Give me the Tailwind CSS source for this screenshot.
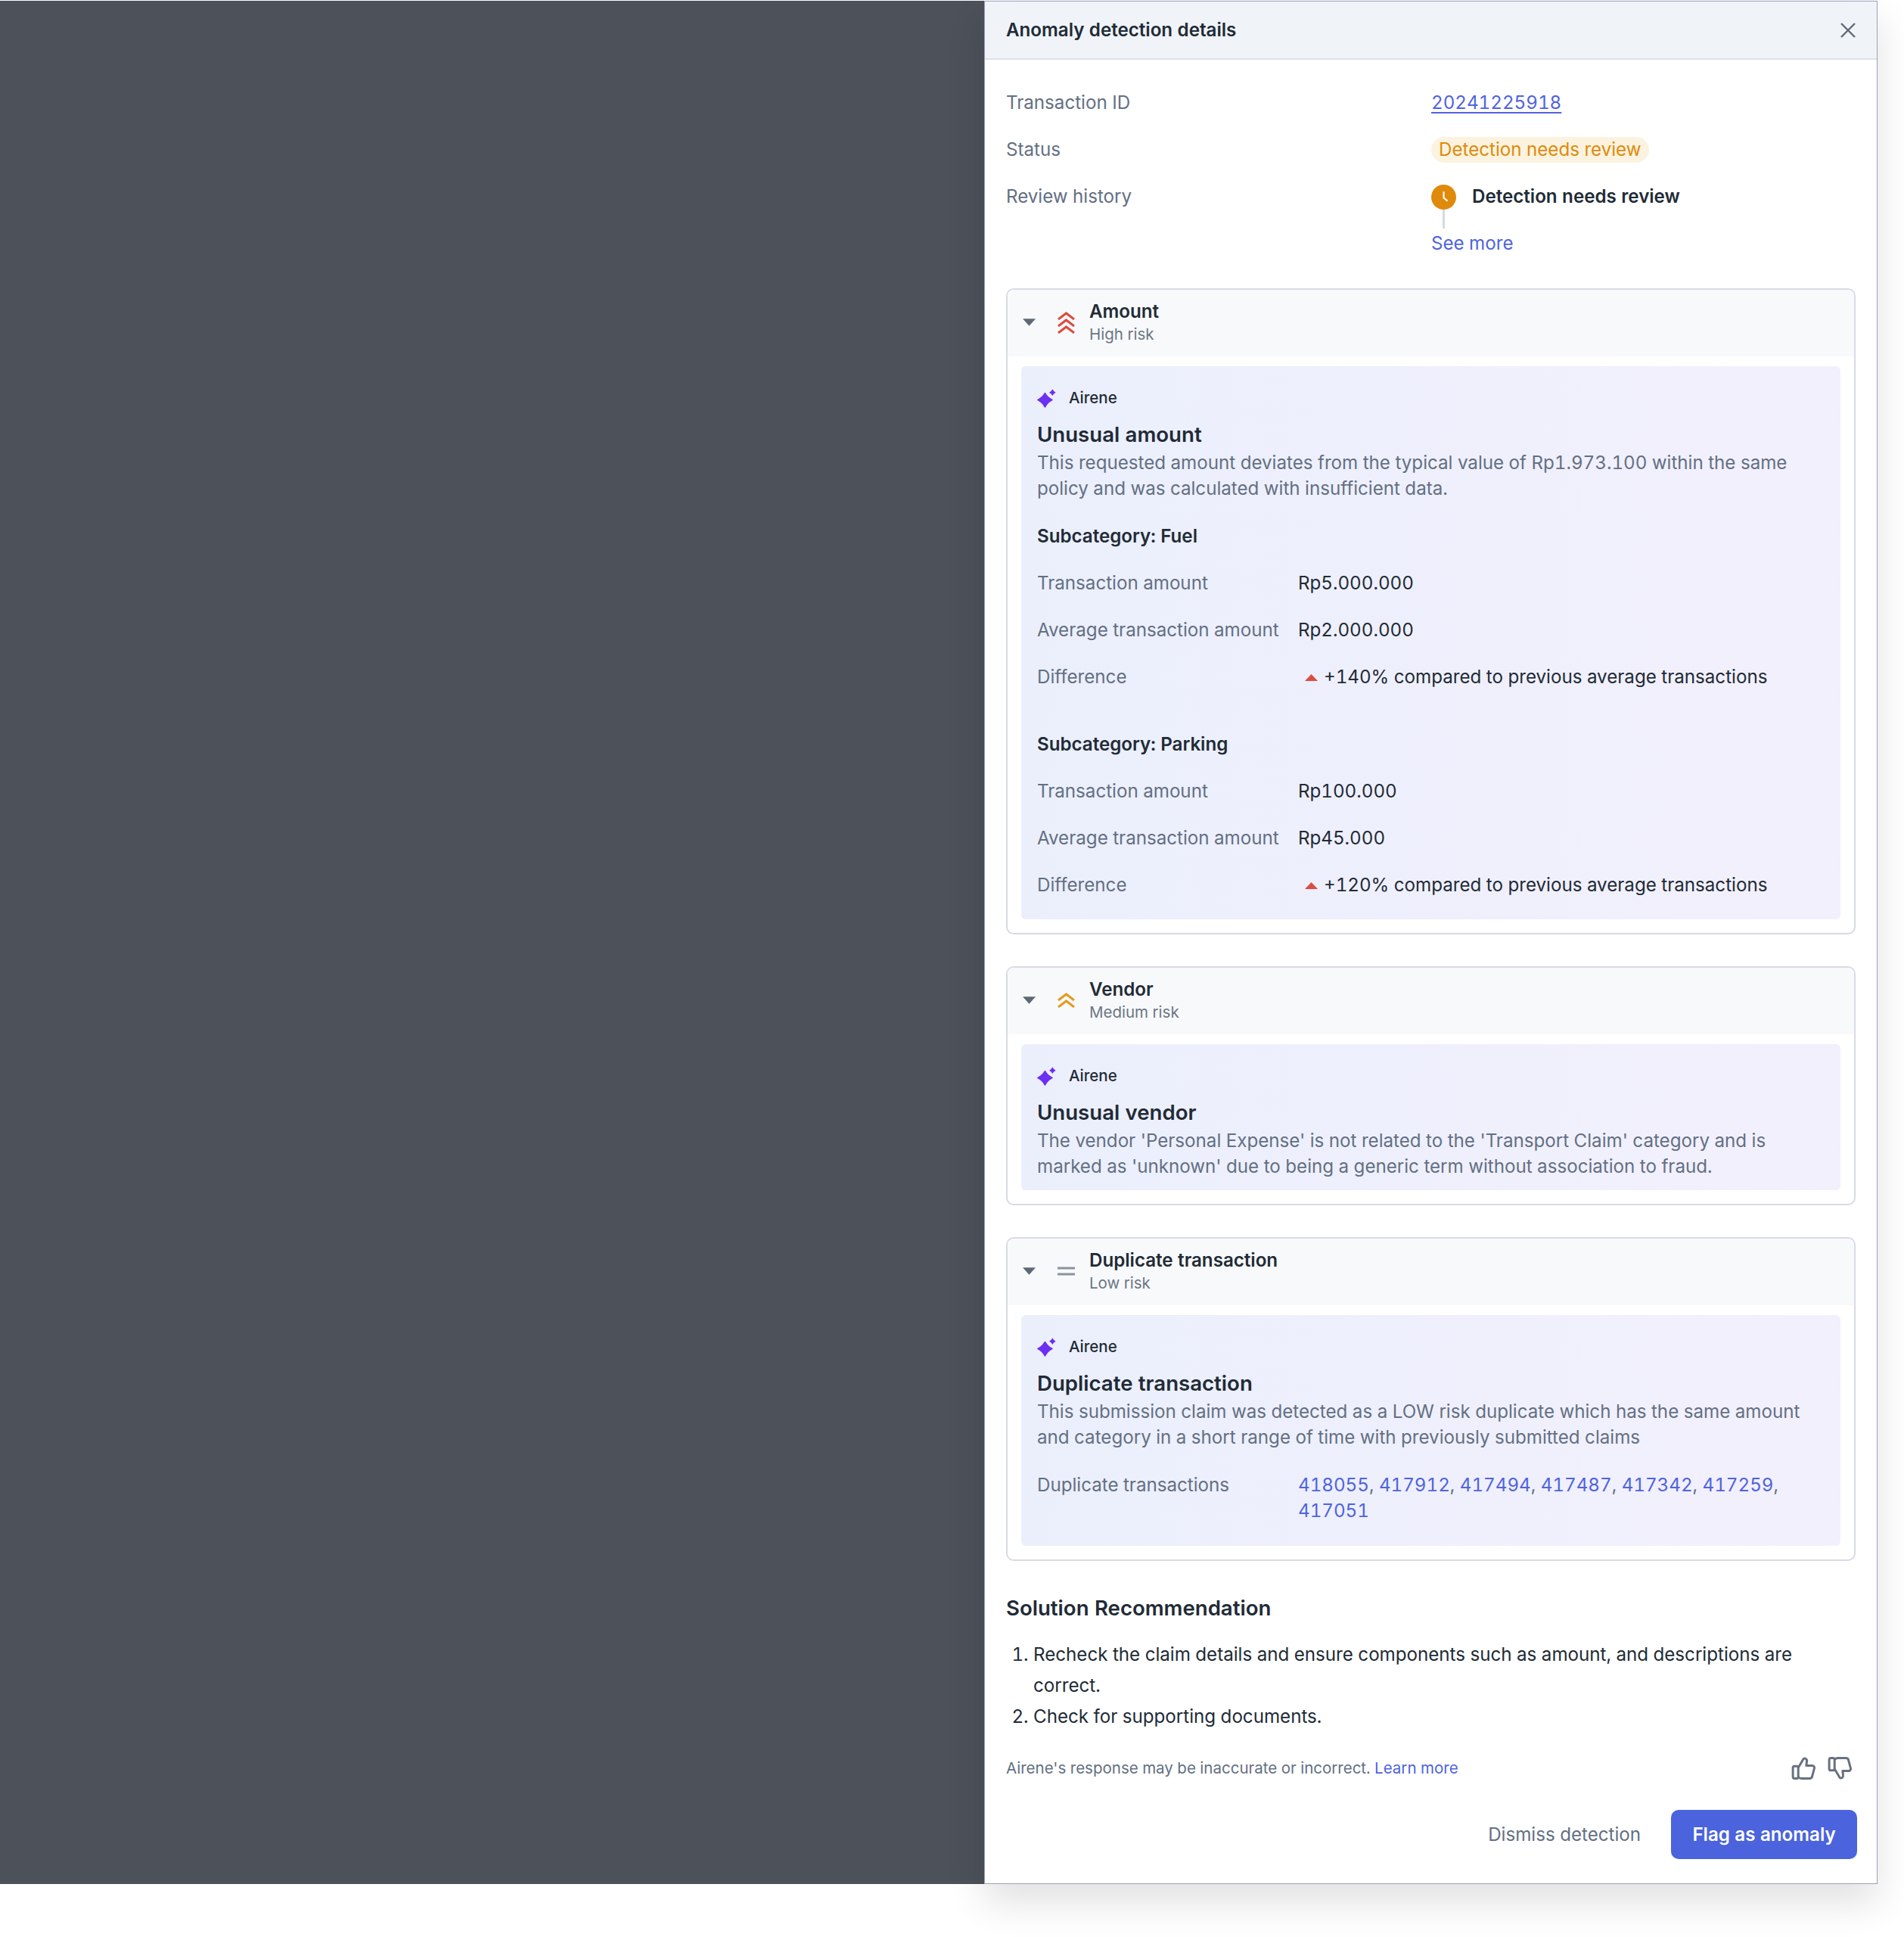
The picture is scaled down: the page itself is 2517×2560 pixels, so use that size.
<!DOCTYPE html>
<html lang="en">
  <head>
    <meta charset="UTF-8" />
    <title>Anomaly detection details</title>
    <script src="https://cdn.jsdelivr.net/npm/@tailwindcss/browser@4"></script>
  </head>
  <body class="bg-white text-[#212b36] font-['Inter',sans-serif] text-[24.15px] leading-[34px] tabular-nums">
    <div class="w-[2482px] h-[2560px] pt-px">
      <div class="flex h-[2489px]">
        <!-- Backdrop -->
        <div class="w-[1301px] bg-[#4c515a]"></div>

        <!-- Drawer -->
        <div class="w-[1181px] bg-white border border-[#9aa2b6] shadow-[0_24px_48px_rgba(0,0,0,0.12)] flex flex-col">
          <div class="h-[77px] shrink-0 bg-[#f0f3f8] border-b-2 border-[#dde1e8] flex items-center justify-between pl-[28px] pr-[26px]">
            <h1 class="font-semibold">Anomaly detection details</h1>
            <svg class="size-[24px] text-[#5f6875]" viewBox="0 0 24 24" fill="none" stroke="currentColor" stroke-width="2.4"><path d="M3 3l18 18M21 3L3 21" /></svg>
          </div>

          <div class="flex flex-col px-[28px] pt-[26px]">
            <!-- Summary -->
            <div class="grid grid-cols-[562px_1fr] text-[#637083]">
              <div class="h-[62px] flex items-center">Transaction ID</div>
              <div class="h-[62px] flex items-center"><a class="text-[#4f63e0] underline underline-offset-4">20241225918</a></div>
              <div class="h-[62px] flex items-center">Status</div>
              <div class="h-[62px] flex items-center"><span class="h-[34px] px-[10px] rounded-full bg-[#fbf3df] text-[#e08a0b] flex items-center">Detection needs review</span></div>
              <div class="h-[62px] flex items-center">Review history</div>
              <div class="h-[62px] flex items-center gap-[21px] relative">
                <svg class="size-[33px]" viewBox="0 0 32 32"><circle cx="16" cy="16" r="16" fill="#e08a0b" /><path d="M16 9v8l5 4" fill="none" stroke="#fff" stroke-width="2" /></svg>
                <span class="font-semibold text-[#212b36]">Detection needs review</span>
                <span class="absolute left-[15px] top-[48px] w-[3px] h-[25px] bg-[#d5d9e1]"></span>
              </div>
              <div class="h-[62px]"></div>
              <div class="h-[62px] flex items-center text-[#4f63e0]">See more</div>
            </div>

            <!-- Amount -->
            <section class="mt-[28px] border-2 border-[#d7dbe5] rounded-[10px] pb-[18px]">
              <div class="h-[88px] bg-[#f8f9fb] rounded-t-[8px] flex items-center pl-[20px]">
                <svg class="w-[17px] h-[10px] -mt-[2px] text-[#5f6875]" viewBox="0 0 16 9"><path d="M0 0h16L8 9z" fill="currentColor" /></svg>
                <svg class="ml-[29px] -mt-[2px] w-[23px] h-[29px] text-[#dc4c3f]" viewBox="0 0 23 29" fill="none" stroke="currentColor" stroke-width="3"><path d="M1 10L11.500 2 22 10M1 19L11.500 11 22 19M1 28L11.500 20 22 28" /></svg>
                <div class="ml-[19px]">
                  <div class="font-semibold leading-[30px]">Amount</div>
                  <div class="text-[20.5px] leading-[30px] text-[#6b7684]">High risk</div>
                </div>
              </div>
              <div class="mx-[18px] mt-[13px] rounded-[6px] bg-linear-to-r from-[#ebeffc] to-[#f3f0fd] pt-[25px] px-[21px] pb-[14px]">
                <div class="flex items-center gap-[17px] h-[34px] font-medium text-[20.5px]">
                  <svg class="size-[25px]" viewBox="0 0 24 24" fill="#6d2ff2" stroke="#6d2ff2" stroke-width="1.6" stroke-linejoin="round"><path d="M10 5.500Q13 11 19 14 13 17 10 23 7 17 1 14 7 11 10 5.500zM19.500 1.500Q20.200 3.800 22.500 4.500 20.200 5.200 19.500 7.500 18.800 5.200 16.500 4.500 18.800 3.800 19.500 1.500z" /></svg>
                  <span>Airene</span>
                </div>
                <h2 class="mt-[11px] text-[27.6px] leading-[41px] font-semibold">Unusual amount</h2>
                <p class="text-[#637083]">This requested amount deviates from the typical value of Rp1.973.100 within the same policy and was calculated with insufficient data.</p>

                <div class="mt-[15px] h-[62px] flex items-center font-semibold">Subcategory: Fuel</div>
                <div class="h-[62px] flex items-center"><span class="w-[345px] text-[#637083]">Transaction amount</span><span>Rp5.000.000</span></div>
                <div class="h-[62px] flex items-center"><span class="w-[345px] text-[#637083]">Average transaction amount</span><span>Rp2.000.000</span></div>
                <div class="h-[62px] flex items-center">
                  <span class="w-[345px] text-[#637083]">Difference</span>
                  <svg class="ml-[9px] mr-[8px] w-[17px] h-[9px]" viewBox="0 0 17 9"><path d="M8.500 0L17 9H0z" fill="#dc4c3f" /></svg>
                  <span>+140% compared to previous average transactions</span>
                </div>

                <div class="mt-[27px] h-[62px] flex items-center font-semibold">Subcategory: Parking</div>
                <div class="h-[62px] flex items-center"><span class="w-[345px] text-[#637083]">Transaction amount</span><span>Rp100.000</span></div>
                <div class="h-[62px] flex items-center"><span class="w-[345px] text-[#637083]">Average transaction amount</span><span>Rp45.000</span></div>
                <div class="h-[62px] flex items-center">
                  <span class="w-[345px] text-[#637083]">Difference</span>
                  <svg class="ml-[9px] mr-[8px] w-[17px] h-[9px]" viewBox="0 0 17 9"><path d="M8.500 0L17 9H0z" fill="#dc4c3f" /></svg>
                  <span>+120% compared to previous average transactions</span>
                </div>
              </div>
            </section>

            <!-- Vendor -->
            <section class="mt-[42px] border-2 border-[#d7dbe5] rounded-[10px] pb-[18px]">
              <div class="h-[88px] bg-[#f8f9fb] rounded-t-[8px] flex items-center pl-[20px]">
                <svg class="w-[17px] h-[10px] -mt-[2px] text-[#5f6875]" viewBox="0 0 16 9"><path d="M0 0h16L8 9z" fill="currentColor" /></svg>
                <svg class="ml-[29px] -mt-[2px] w-[23px] h-[20px] text-[#e59a1f]" viewBox="0 0 23 20" fill="none" stroke="currentColor" stroke-width="3"><path d="M1 10L11.500 2 22 10M1 19L11.500 11 22 19" /></svg>
                <div class="ml-[19px]">
                  <div class="font-semibold leading-[30px]">Vendor</div>
                  <div class="text-[20.5px] leading-[30px] text-[#6b7684]">Medium risk</div>
                </div>
              </div>
              <div class="mx-[18px] mt-[13px] rounded-[6px] bg-linear-to-r from-[#ebeffc] to-[#f3f0fd] pt-[25px] px-[21px] pb-[14px]">
                <div class="flex items-center gap-[17px] h-[34px] font-medium text-[20.5px]">
                  <svg class="size-[25px]" viewBox="0 0 24 24" fill="#6d2ff2" stroke="#6d2ff2" stroke-width="1.6" stroke-linejoin="round"><path d="M10 5.500Q13 11 19 14 13 17 10 23 7 17 1 14 7 11 10 5.500zM19.500 1.500Q20.200 3.800 22.500 4.500 20.200 5.200 19.500 7.500 18.800 5.200 16.500 4.500 18.800 3.800 19.500 1.500z" /></svg>
                  <span>Airene</span>
                </div>
                <h2 class="mt-[11px] text-[27.6px] leading-[41px] font-semibold">Unusual vendor</h2>
                <p class="text-[#637083]">The vendor 'Personal Expense' is not related to the 'Transport Claim' category and is marked as 'unknown' due to being a generic term without association to fraud.</p>
              </div>
            </section>

            <!-- Duplicate transaction -->
            <section class="mt-[42px] border-2 border-[#d7dbe5] rounded-[10px] pb-[18px]">
              <div class="h-[88px] bg-[#f8f9fb] rounded-t-[8px] flex items-center pl-[20px]">
                <svg class="w-[17px] h-[10px] -mt-[2px] text-[#5f6875]" viewBox="0 0 16 9"><path d="M0 0h16L8 9z" fill="currentColor" /></svg>
                <svg class="ml-[29px] -mt-[2px] w-[23px] h-[12px] text-[#8b93a1]" viewBox="0 0 23 12" fill="none" stroke="currentColor" stroke-width="3"><path d="M0 2h23M0 10h23" /></svg>
                <div class="ml-[19px]">
                  <div class="font-semibold leading-[30px]">Duplicate transaction</div>
                  <div class="text-[20.5px] leading-[30px] text-[#6b7684]">Low risk</div>
                </div>
              </div>
              <div class="mx-[18px] mt-[13px] rounded-[6px] bg-linear-to-r from-[#ebeffc] to-[#f3f0fd] pt-[25px] px-[21px] pb-[29px]">
                <div class="flex items-center gap-[17px] h-[34px] font-medium text-[20.5px]">
                  <svg class="size-[25px]" viewBox="0 0 24 24" fill="#6d2ff2" stroke="#6d2ff2" stroke-width="1.6" stroke-linejoin="round"><path d="M10 5.500Q13 11 19 14 13 17 10 23 7 17 1 14 7 11 10 5.500zM19.500 1.500Q20.200 3.800 22.500 4.500 20.200 5.200 19.500 7.500 18.800 5.200 16.500 4.500 18.800 3.800 19.500 1.500z" /></svg>
                  <span>Airene</span>
                </div>
                <h2 class="mt-[11px] text-[27.6px] leading-[41px] font-semibold">Duplicate transaction</h2>
                <p class="text-[#637083]">This submission claim was detected as a LOW risk duplicate which has the same amount and category in a short range of time with previously submitted claims</p>
                <div class="mt-[29px] flex">
                  <span class="w-[345px] shrink-0 text-[#637083]">Duplicate transactions</span>
                  <span class="text-[#637083]"><a class="text-[#4f63e0]">418055</a>, <a class="text-[#4f63e0]">417912</a>, <a class="text-[#4f63e0]">417494</a>, <a class="text-[#4f63e0]">417487</a>, <a class="text-[#4f63e0]">417342</a>, <a class="text-[#4f63e0]">417259</a>, <a class="text-[#4f63e0]">417051</a></span>
                </div>
              </div>
            </section>

            <!-- Recommendation -->
            <h2 class="mt-[41px] text-[27.6px] leading-[42px] font-semibold">Solution Recommendation</h2>
            <ol class="mt-[20px] list-decimal pl-[36px] leading-[41px]">
              <li>Recheck the claim details and ensure components such as amount, and descriptions are correct.</li>
              <li>Check for supporting documents.</li>
            </ol>

            <div class="mt-[31px] h-[34px] flex items-center justify-between">
              <p class="text-[20.5px] text-[#637083]">Airene's response may be inaccurate or incorrect. <a class="text-[#4f63e0]">Learn more</a></p>
              <div class="flex gap-[14px] pr-[3px] text-[#687180]">
                <svg class="size-[34px]" viewBox="0 0 24 24" fill="none" stroke="currentColor" stroke-width="2.1" stroke-linejoin="round"><rect x="1.500" y="10" width="5" height="11.500" rx="1.500" /><path d="M6.500 11.500L11.500 3a2.200 2.200 0 0 1 3 2.500L14 9.500h5.500a2 2 0 0 1 2 2.500l-2 7.500a2.500 2.500 0 0 1-2.400 2H10a3.500 3.500 0 0 1-3.500-1.500" /></svg>
                <svg class="size-[34px] -scale-y-100" viewBox="0 0 24 24" fill="none" stroke="currentColor" stroke-width="2.1" stroke-linejoin="round"><rect x="1.500" y="10" width="5" height="11.500" rx="1.500" /><path d="M6.500 11.500L11.500 3a2.200 2.200 0 0 1 3 2.500L14 9.500h5.500a2 2 0 0 1 2 2.500l-2 7.500a2.500 2.500 0 0 1-2.400 2H10a3.500 3.500 0 0 1-3.500-1.500" /></svg>
              </div>
            </div>

            <div class="mt-[38px] flex items-center justify-end gap-[40px] -mr-[2px]">
              <button class="text-[#637083]">Dismiss detection</button>
              <button class="h-[65px] w-[246px] rounded-[10px] bg-[#4b63dd] text-white font-semibold">Flag as anomaly</button>
            </div>
          </div>
        </div>
      </div>
    </div>
  </body>
</html>
